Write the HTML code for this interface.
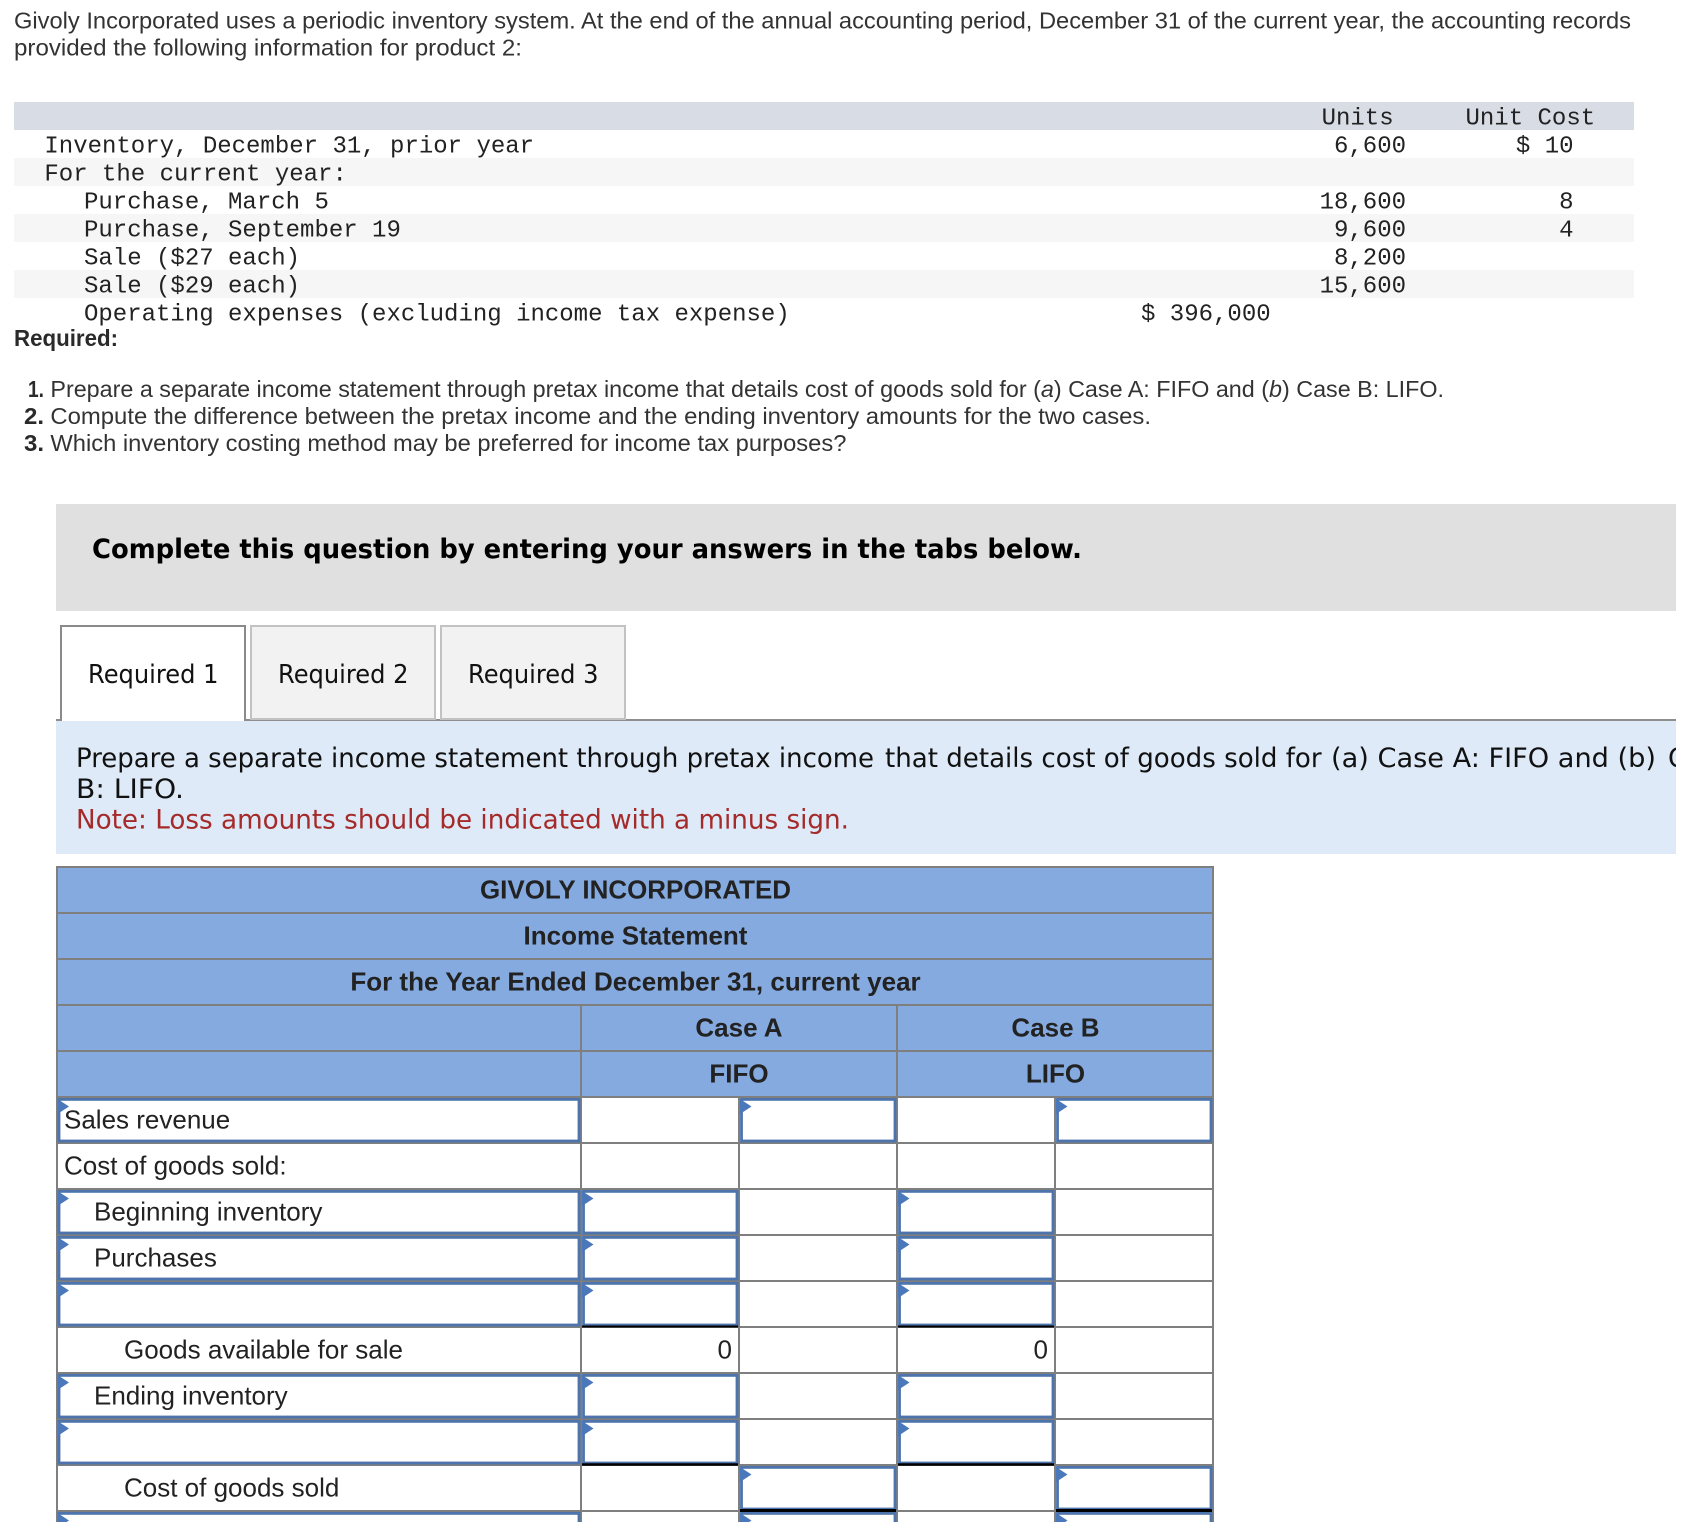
<!DOCTYPE html>
<html lang="en">
<head>
<meta charset="utf-8">
<title>Givoly Incorporated</title>
<style>
html,body{margin:0;padding:0;background:#fff;width:1698px;height:1530px;overflow:hidden}
svg{display:block}
.p{font-family:"Liberation Sans",Arial,sans-serif;font-size:23px;fill:#333}
.pb{font-family:"Liberation Sans",Arial,sans-serif;font-size:23px;fill:#2a2a2a;font-weight:bold}
.m{font-family:"Liberation Mono",monospace;font-size:24px;fill:#222}
.v{font-family:"DejaVu Sans",Verdana,sans-serif;font-size:26.5px;fill:#111}
.t{font-family:"Liberation Sans",Arial,sans-serif;font-size:26px;fill:#222}
.h{font-family:"Liberation Sans",Arial,sans-serif;font-size:26px;fill:#222;font-weight:bold;text-anchor:middle}
.g{stroke:#7f7f7f;stroke-width:2;fill:none}
.k{stroke:#000;fill:none}
</style>
</head>
<body>
<svg width="1698" height="1530" viewBox="0 0 1698 1530" xmlns="http://www.w3.org/2000/svg">
<defs>
<clipPath id="cp"><rect x="0" y="700" width="1676" height="160"/></clipPath>
<g id="tri"><polygon points="0,0 11.5,7.5 0,15" fill="#4a78ba"/></g>
<g id="bl"><rect x="2" y="2.4" width="520" height="41.6" fill="#fff" stroke="#4d74ad" stroke-width="2.8"/><use href="#tri" x="0.5" y="2"/></g>
<g id="bc"><rect x="2.5" y="2.4" width="153.5" height="41.6" fill="#fff" stroke="#4d74ad" stroke-width="2.8"/><use href="#tri" x="1" y="2"/></g>
</defs>
<rect width="1698" height="1530" fill="#fff"/>

<text class="p" x="14" y="28.5" textLength="1617" lengthAdjust="spacingAndGlyphs">Givoly Incorporated uses a periodic inventory system. At the end of the annual accounting period, December 31 of the current year, the accounting records</text>
<text class="p" x="14" y="55.5" textLength="508" lengthAdjust="spacingAndGlyphs">provided the following information for product 2:</text>

<rect x="14" y="102" width="1620" height="28" fill="#d7dce5"/>
<rect x="14" y="158" width="1620" height="28" fill="#f6f6f6"/>
<rect x="14" y="214" width="1620" height="28" fill="#f6f6f6"/>
<rect x="14" y="270" width="1620" height="28" fill="#f6f6f6"/>

<text class="m" x="1321.6" y="124.6">Units</text>
<text class="m" x="1465.5" y="124.6">Unit Cost</text>
<text class="m" x="44.4" y="152.6">Inventory, December 31, prior year</text>
<text class="m" x="1406" y="152.6" text-anchor="end">6,600</text>
<text class="m" x="1573.5" y="152.6" text-anchor="end">$ 10</text>
<text class="m" x="44.4" y="180.6">For the current year:</text>
<text class="m" x="84" y="208.6">Purchase, March 5</text>
<text class="m" x="1406" y="208.6" text-anchor="end">18,600</text>
<text class="m" x="1573.5" y="208.6" text-anchor="end">8</text>
<text class="m" x="84" y="236.6">Purchase, September 19</text>
<text class="m" x="1406" y="236.6" text-anchor="end">9,600</text>
<text class="m" x="1573.5" y="236.6" text-anchor="end">4</text>
<text class="m" x="84" y="264.6">Sale ($27 each)</text>
<text class="m" x="1406" y="264.6" text-anchor="end">8,200</text>
<text class="m" x="84" y="292.6">Sale ($29 each)</text>
<text class="m" x="1406" y="292.6" text-anchor="end">15,600</text>
<text class="m" x="84" y="320.6">Operating expenses (excluding income tax expense)</text>
<text class="m" x="1141" y="320.6">$ 396,000</text>

<text class="pb" x="14" y="346" textLength="104" lengthAdjust="spacingAndGlyphs">Required:</text>
<text class="pb" x="28" y="397" textLength="16" lengthAdjust="spacingAndGlyphs">1.</text>
<text class="p" x="50.4" y="397" textLength="1393.6" lengthAdjust="spacingAndGlyphs">Prepare a separate income statement through pretax income that details cost of goods sold for (<tspan font-style="italic">a</tspan>) Case A: FIFO and (<tspan font-style="italic">b</tspan>) Case B: LIFO.</text>
<text class="pb" x="24" y="424" textLength="20" lengthAdjust="spacingAndGlyphs">2.</text>
<text class="p" x="50.4" y="424" textLength="1100.6" lengthAdjust="spacingAndGlyphs">Compute the difference between the pretax income and the ending inventory amounts for the two cases.</text>
<text class="pb" x="24" y="451" textLength="20" lengthAdjust="spacingAndGlyphs">3.</text>
<text class="p" x="50.4" y="451" textLength="796" lengthAdjust="spacingAndGlyphs">Which inventory costing method may be preferred for income tax purposes?</text>

<rect x="56" y="504" width="1620" height="107" fill="#e0e0e0"/>
<text class="v" x="92" y="558" font-weight="bold" style="fill:#000;font-size:27px" textLength="990" lengthAdjust="spacingAndGlyphs">Complete this question by entering your answers in the tabs below.</text>

<rect x="56" y="719" width="1620" height="2.4" fill="#8e8e8e"/>
<rect x="61" y="626" width="184" height="96" fill="#fff" stroke="#8a8a8a" stroke-width="2"/>
<rect x="60" y="721" width="186" height="3" fill="#fff"/>
<rect x="251" y="626" width="184" height="93" fill="#f2f2f2" stroke="#c2c2c2" stroke-width="2"/>
<rect x="441" y="626" width="184" height="93" fill="#f2f2f2" stroke="#c2c2c2" stroke-width="2"/>
<text class="v" x="88" y="683" style="font-size:26px" textLength="130.5" lengthAdjust="spacingAndGlyphs">Required 1</text>
<text class="v" x="278" y="683" style="font-size:26px" textLength="130.5" lengthAdjust="spacingAndGlyphs">Required 2</text>
<text class="v" x="468" y="683" style="font-size:26px" textLength="130.5" lengthAdjust="spacingAndGlyphs">Required 3</text>

<rect x="56" y="721" width="1620" height="133" fill="#deeaf8"/>
<text class="v" x="76" y="767" textLength="798" lengthAdjust="spacingAndGlyphs">Prepare a separate income statement through pretax income</text>
<text class="v" x="885" y="767" textLength="436.6" lengthAdjust="spacingAndGlyphs">that details cost of goods sold for</text>
<text class="v" x="1331" y="767" textLength="325" lengthAdjust="spacingAndGlyphs">(a) Case A: FIFO and (b)</text>
<g clip-path="url(#cp)"><text class="v" x="1668" y="767">Case</text></g>
<text class="v" x="76" y="798" textLength="108" lengthAdjust="spacingAndGlyphs">B: LIFO.</text>
<text class="v" x="76" y="828.7" style="fill:#a52a2a" textLength="773" lengthAdjust="spacingAndGlyphs">Note: Loss amounts should be indicated with a minus sign.</text>

<!-- statement table -->
<rect x="57" y="867" width="1156" height="230" fill="#84aae0"/>
<rect x="57" y="1097" width="1156" height="425" fill="#fff"/>

<g class="g">
<path d="M56 867H1214M56 913H1214M56 959H1214M56 1005H1214M56 1051H1214M56 1097H1214M56 1143H1214M56 1189H1214M56 1235H1214M56 1281H1214M56 1327H1214M56 1373H1214M56 1419H1214M56 1465H1214M56 1511H1214"/>
<path d="M57 867V1522M1213 867V1522M581 1005V1522M897 1005V1522M739 1097V1522M1055 1097V1522"/>
</g>

<text class="h" x="635.5" y="898.7" textLength="311" lengthAdjust="spacingAndGlyphs">GIVOLY INCORPORATED</text>
<text class="h" x="635.5" y="944.7">Income Statement</text>
<text class="h" x="635.5" y="990.7">For the Year Ended December 31, current year</text>
<text class="h" x="739" y="1036.7">Case A</text>
<text class="h" x="1055.5" y="1036.7">Case B</text>
<text class="h" x="739" y="1082.7">FIFO</text>
<text class="h" x="1055.5" y="1082.7">LIFO</text>

<use href="#bl" x="57" y="1097"/><use href="#bc" x="739" y="1097"/><use href="#bc" x="1055" y="1097"/>
<use href="#bl" x="57" y="1189"/><use href="#bc" x="581" y="1189"/><use href="#bc" x="897" y="1189"/>
<use href="#bl" x="57" y="1235"/><use href="#bc" x="581" y="1235"/><use href="#bc" x="897" y="1235"/>
<use href="#bl" x="57" y="1281"/><use href="#bc" x="581" y="1281"/><use href="#bc" x="897" y="1281"/>
<use href="#bl" x="57" y="1373"/><use href="#bc" x="581" y="1373"/><use href="#bc" x="897" y="1373"/>
<use href="#bl" x="57" y="1419"/><use href="#bc" x="581" y="1419"/><use href="#bc" x="897" y="1419"/>
<use href="#bc" x="739" y="1465"/><use href="#bc" x="1055" y="1465"/>
<use href="#bl" x="57" y="1511"/><use href="#bc" x="739" y="1511"/><use href="#bc" x="1055" y="1511"/>

<path class="k" stroke-width="2" d="M582 1326.5H738M898 1326.5H1054"/>
<path class="k" stroke-width="2.5" d="M582 1464.5H738M898 1464.5H1054"/>
<path class="k" stroke-width="3" d="M740 1510.5H896M1056 1510.5H1212"/>

<text class="t" x="64" y="1128.7">Sales revenue</text>
<text class="t" x="64" y="1174.7">Cost of goods sold:</text>
<text class="t" x="94" y="1220.7">Beginning inventory</text>
<text class="t" x="94" y="1266.7">Purchases</text>
<text class="t" x="124" y="1358.7">Goods available for sale</text>
<text class="t" x="732" y="1358.7" text-anchor="end">0</text>
<text class="t" x="1048" y="1358.7" text-anchor="end">0</text>
<text class="t" x="94" y="1404.7">Ending inventory</text>
<text class="t" x="124" y="1496.7">Cost of goods sold</text>

<rect x="0" y="1522" width="1698" height="8" fill="#fff"/>
</svg>
</body>
</html>
